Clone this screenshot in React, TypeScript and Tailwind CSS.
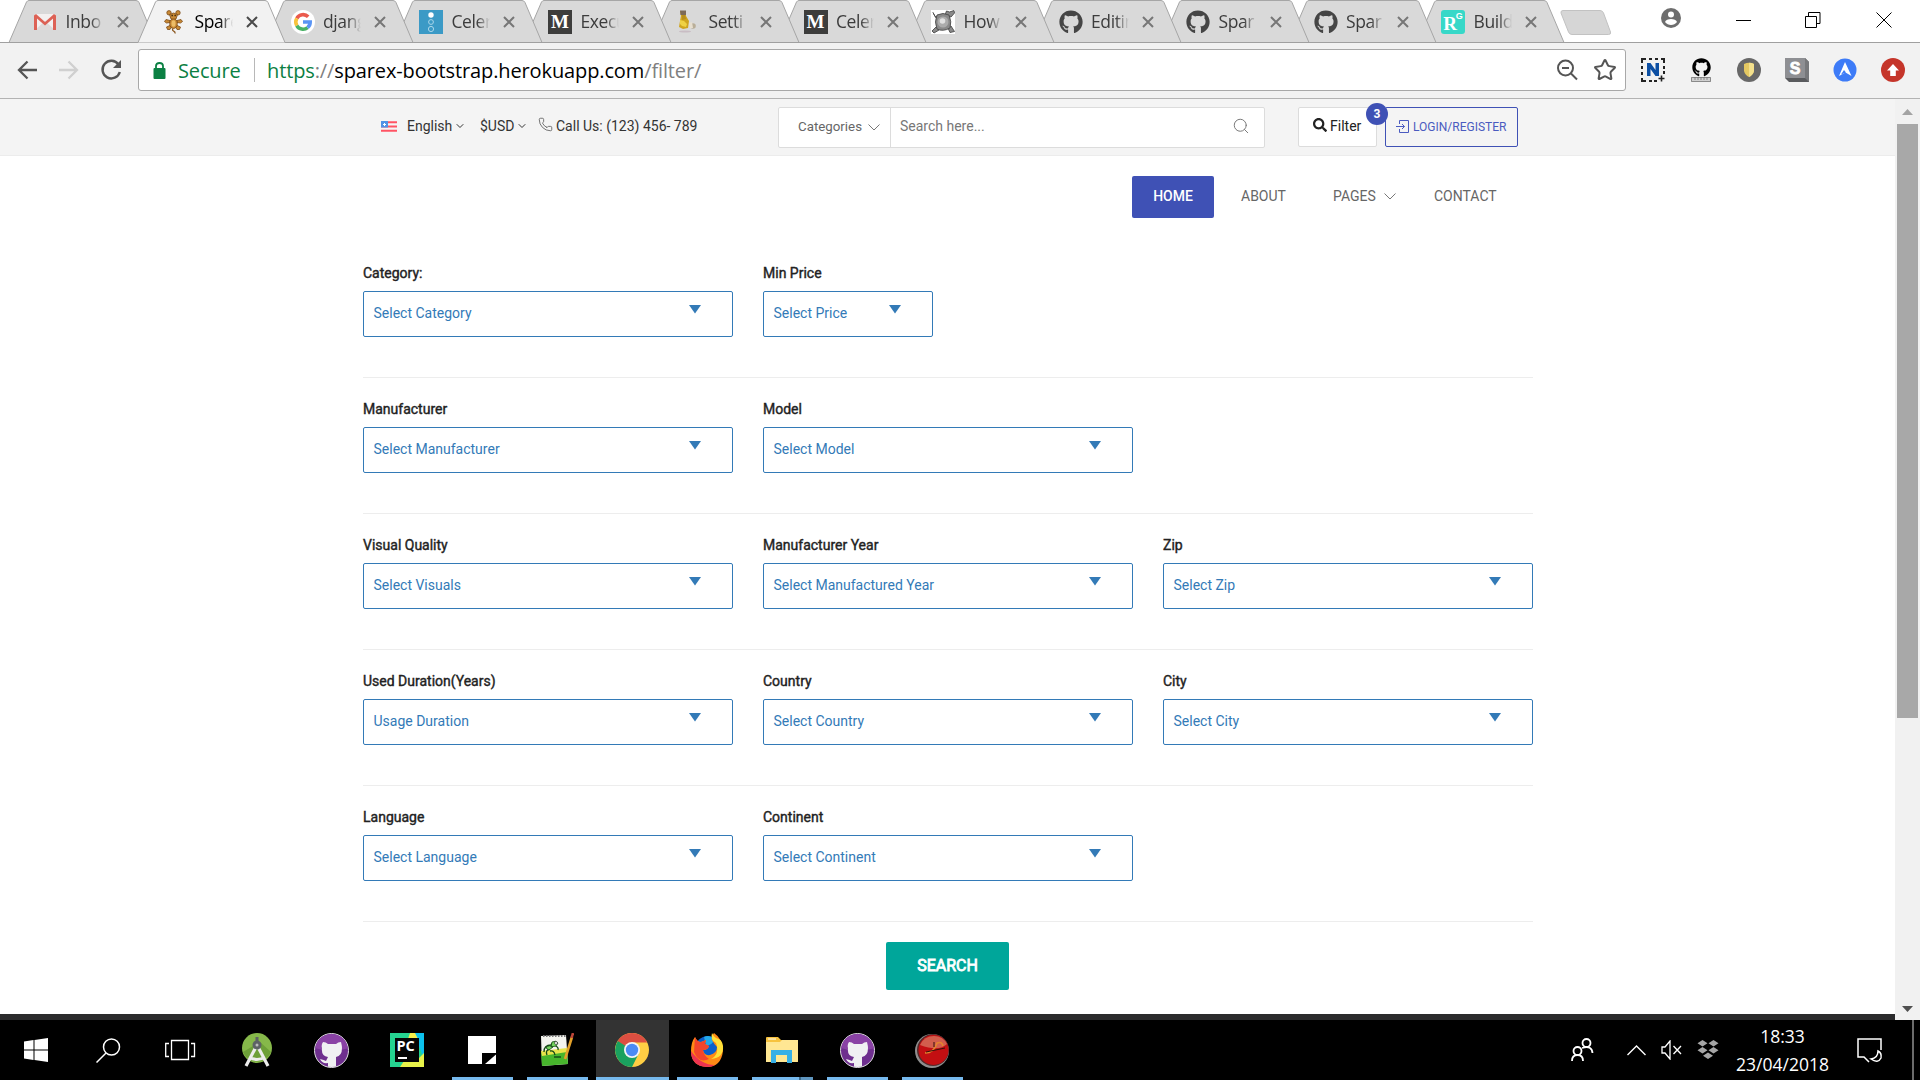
import React from "react";
import { FaGithub, FaSearch } from "react-icons/fa";
import { ChevronDown, Phone, Search, Star } from "lucide-react";

type IconName =
  | "gmail" | "mouse" | "google" | "celery" | "medium" | "bottle" | "turtle" | "github" | "rg";

const TABS: { icon: IconName; label: string; step: string; z: string }[] = [
  { icon: "gmail", label: "Inbo", step: "w-[129px]", z: "z-[12]" },
  { icon: "mouse", label: "Spare", step: "w-[128.5px]", z: "z-[20]" },
  { icon: "google", label: "djang", step: "w-[128.5px]", z: "z-[10]" },
  { icon: "celery", label: "Celer", step: "w-[129px]", z: "z-[9]" },
  { icon: "medium", label: "Execu", step: "w-[128px]", z: "z-[8]" },
  { icon: "bottle", label: "Setti", step: "w-[127.5px]", z: "z-[7]" },
  { icon: "medium", label: "Celer", step: "w-[127.5px]", z: "z-[6]" },
  { icon: "turtle", label: "How", step: "w-[127.5px]", z: "z-[5]" },
  { icon: "github", label: "Editin", step: "w-[127.5px]", z: "z-[4]" },
  { icon: "github", label: "Spar", step: "w-[127.5px]", z: "z-[3]" },
  { icon: "github", label: "Spar", step: "w-[127.5px]", z: "z-[2]" },
  { icon: "rg", label: "Build", step: "w-[128px]", z: "z-[1]" },
];

function TabIcon({ name }: { name: IconName }) {
  switch (name) {
    case "gmail":
      return (
        <svg viewBox="0 0 24 24" className="size-6">
          <path d="M2 4h20v16H2z" fill="#f3f0f0" />
          <path d="M2 20 12 11l10 9z" fill="#dedada" />
          <path d="M1 20V5.500L3 4l9 8 9-8 2 1.500V20h-3V8.500L12 15.500 4 8.500V20z" fill="#dd6155" />
        </svg>
      );
    case "mouse":
      return (
        <svg viewBox="0 0 24 24" className="size-6">
          <g fill="#c98a35" stroke="#7b4a16" strokeWidth=".8">
            <circle cx="7" cy="2.800" r="2.200" />
            <circle cx="16" cy="2.800" r="2.200" />
            <path d="m8 10.500-4-1-1.500 2 2 1.500 3.500-.500zM15 10.500l4-1 1.500 2-2 1.500-3.500-.500zM8 15.500l-3.500 1.500 1 2.500h2.500l1.500-2.500zM15 15.500l3.500 1.500-1 2.500h-2.500l-1.500-2.500z" />
            <ellipse cx="11.500" cy="13.500" rx="3.800" ry="5" />
            <path d="M7.500 4.500 11.500 3 15.500 4.500 14 9H9z" />
          </g>
          <ellipse cx="11.500" cy="13.500" rx="2" ry="3.200" fill="#edbd68" />
          <path d="M11 18.500c-2 3.500 3 1.500 2 5" stroke="#8c5820" fill="none" strokeWidth="1.300" />
          <path d="M9.500 5.500h1.300M12.500 5.500h1.300" stroke="#2e1a08" strokeWidth="1.400" />
        </svg>
      );
    case "google":
      return (
        <svg viewBox="0 0 24 24" className="size-6">
          <circle cx="12" cy="12" r="12" fill="#fff" />
          <g fill="none" strokeWidth="3.600">
            <path d="M17.200 6.800A7.200 7.200 0 0 0 5.800 8.400" stroke="#ea5a4d" />
            <path d="M5.800 8.400a7.200 7.200 0 0 0 0 7.200" stroke="#f8c33c" />
            <path d="M5.800 15.600a7.200 7.200 0 0 0 10.800 2" stroke="#4ab266" />
            <path d="M16.600 17.600A7.200 7.200 0 0 0 19.200 12H12" stroke="#5a95f5" />
          </g>
        </svg>
      );
    case "celery":
      return (
        <svg viewBox="0 0 24 24" className="size-6">
          <path d="M0 0h24v24H0z" fill="#3b9ac6" />
          <circle cx="12" cy="5" r="2.700" fill="#fff" />
          <circle cx="12" cy="12" r="2.400" fill="none" stroke="#a9d6ea" />
          <circle cx="12" cy="19" r="2.600" fill="none" stroke="#a9d6ea" />
        </svg>
      );
    case "medium":
      return (
        <span className="grid size-6 place-items-center bg-[#3d3d3c] font-['Liberation_Serif',serif] text-[19px] leading-none font-bold text-white">
          M
        </span>
      );
    case "bottle":
      return (
        <svg viewBox="0 0 24 24" className="size-6">
          <ellipse cx="9" cy="21.500" rx="6" ry="1" fill="#c9bdc4" />
          <path d="M4 1h6v5l3 5-1 7-5 1-4-2 1-6 1-5z" fill="#cfa51f" />
          <path d="M4 .500h6V5H4.500z" fill="#7d6a58" />
          <path d="m4 10 4 1 3 3-1 3-4-1-2-2z" fill="#efd244" />
          <path d="M6 5h3l1 4-4 1z" fill="#b98f1d" />
          <circle cx="17" cy="16" r="2.800" fill="#b9ae98" />
          <path d="m13 13 3-1 1 6h-3z" fill="#e7dfd0" />
        </svg>
      );
    case "turtle":
      return (
        <svg viewBox="0 0 24 24" className="size-6">
          <path d="M0 0h24v24H0z" fill="#fff" />
          <g fill="#8a8a8a" stroke="#4c4c4c" strokeWidth=".9">
            <path d="M14 5 15.500 1l3 1L23 .500 23.500 3 20 7zM5 8 2 2.500l2 4L8 7zM5 17l-4 4 2 2 5-3zM17 18l2 4.500 4.500-1L20 16z" />
            <path d="M6 5q6-3 12 0 3 7 1 13-7 4-13 1-3-7 0-14z" />
          </g>
          <circle cx="12" cy="12" r="5.500" fill="#acacac" />
          <circle cx="11.500" cy="11" r="2.800" fill="#e2e2e2" />
        </svg>
      );
    case "github":
      return <FaGithub className="size-6 text-[#454545]" />;
    case "rg":
      return (
        <span className="flex size-6 justify-center rounded-[3px] bg-[#37d8c8] font-['Liberation_Serif',serif] leading-none font-bold text-white">
          <span className="pt-1 text-[19px]">R</span>
          <span className="-ml-px pt-0.5 font-['Liberation_Sans',sans-serif] text-[9px]">G</span>
        </span>
      );
  }
}

function Tab({ tab, active }: { tab: (typeof TABS)[number]; active: boolean }) {
  return (
    <div className={`relative h-[43px] shrink-0 ${tab.step} ${tab.z}`}>
      <svg className="absolute top-0 left-0 overflow-visible" width="147" height="43">
        <path
          d="M0 42.500 17.500 2Q18.500.500 20 .500h107q2 0 3 2L147 42.500z"
          fill={active ? "#f2f2f2" : "#d9d9d9"}
        />
        <path
          d="M0 42.500 17.500 2Q18.500.500 20 .500h107q2 0 3 2L147 42.500"
          fill="none"
          stroke="#a6a6a6"
        />
        {!active && <path d="M0 42.500h147" stroke="#a0a0a0" />}
      </svg>
      <div className="relative flex h-[43px] w-[126px] items-center pl-[24.5px]">
        <TabIcon name={tab.icon} />
        <span
          className={`ml-[8.5px] w-[38px] overflow-hidden text-[17.5px] tracking-[-0.4px] whitespace-nowrap [mask-image:linear-gradient(to_right,#000_65%,transparent)] ${
            active ? "text-black" : "text-[#3c3c3c]"
          }`}
        >
          {tab.label}
        </span>
        <svg viewBox="0 0 12 12" className="ml-[13px] size-[12px] shrink-0">
          <path d="m1 1 10 10M11 1 1 11" stroke={active ? "#4a4a4a" : "#777"} strokeWidth="2" />
        </svg>
      </div>
    </div>
  );
}

function TabStrip() {
  return (
    <div className="flex h-[43px] items-start border-b border-[#a0a0a0] bg-white pl-[8.5px]">
      {TABS.map((t, i) => (
        <Tab key={i} tab={t} active={i === 1} />
      ))}
      <svg className="mt-2.5 ml-[15.5px] shrink-0" width="52" height="26" viewBox="0 0 52 26">
        <path d="M3 .500h37q2.500 0 3.500 2.500l7 19q.700 2.500-2 2.500H12q-2.500 0-3.500-2.500L1 3Q.500.500 3 .500z" fill="#d6d6d6" stroke="#c2c2c2" />
      </svg>
      <div className="ml-auto flex h-10 items-center text-black">
        <svg viewBox="0 0 20 20" className="mr-[55px] mb-1 size-5">
          <circle cx="10" cy="10" r="10" fill="#6e6e6e" />
          <circle cx="10" cy="6.600" r="3" fill="#fff" />
          <path d="M4 14c1-4 11-4 12 0-3 4-9 4-12 0z" fill="#fff" />
        </svg>
        <svg width="15" height="16" className="mr-[54px]">
          <path d="M0 8.500h15" stroke="currentColor" />
        </svg>
        <svg width="16" height="16" fill="none" stroke="currentColor" className="mr-[55px]">
          <path d="M.500 4.500h11v11H.500zM3.500 4.500v-4h11.500v11h-3.500" />
        </svg>
        <svg width="16" height="16" stroke="currentColor" className="mr-[28px]">
          <path d="m.500.500 15 15M15.500.500l-15 15" />
        </svg>
      </div>
    </div>
  );
}

function Extensions() {
  return (
    <div className="ml-[15px] flex items-center gap-6">
      <svg viewBox="0 0 24 24" className="size-6">
        <path
          d="M1 5V1h4M8 1h3M14 1h3M20 1h3v4M1 8v3M1 14v3M1 20v3h4M8 23h3M13 23h3M23 8v3M23 13v3"
          fill="none"
          stroke="#222"
          strokeWidth="2"
        />
        <path d="M6 18V5h3.500l5 7V5H18v13h-3.500L9.500 11v7z" fill="#0c4fa3" />
        <path d="M20.500 17.500v6M17.500 20.500h6" stroke="#222" strokeWidth="1.600" />
      </svg>
      <div className="flex w-6 flex-col items-center">
        <FaGithub className="size-[19px] text-black" />
        <svg width="20" height="5" className="bg-[#d0d0d0]">
          <path d="M.500.500h19v4H.500zM4 0v3M7 0v3M10 0v3M13 0v3M16 0v3" fill="none" stroke="#777" strokeWidth=".8" />
        </svg>
      </div>
      <svg viewBox="0 0 24 24" className="size-6">
        <circle cx="12" cy="12" r="12" fill="#686868" />
        <path d="M7 6q5-2.500 10 0v7q-1 4-5 6-4-2-5-6z" fill="#e4c862" />
        <path d="M12 4.700q3 0 5 1.300v7q-1 4-5 6z" fill="#f3e08c" />
      </svg>
      <svg viewBox="0 0 24 24" className="size-6 font-['Liberation_Sans',sans-serif]">
        <path d="m0 0 20 0 4 4v20H4l-4-4z" fill="#5a5b5e" />
        <path d="m20 0 4 4v20l-4-4z" fill="#77787b" />
        <path d="M0 0h20v20H0z" fill="#8e8f93" />
        <text x="10" y="16" textAnchor="middle" fontSize="16" fontWeight="700" fill="#fff" stroke="#fff" strokeWidth=".8">S</text>
      </svg>
      <svg viewBox="0 0 24 24" className="size-6">
        <circle cx="12" cy="12" r="11.500" fill="#3d7bf7" />
        <path d="m12 4 6.500 14-6-3.500L6 18z" fill="#fff" />
        <path d="m11 12 2 2.500-5 2z" fill="#3d7bf7" />
      </svg>
      <svg viewBox="0 0 24 24" className="size-6">
        <circle cx="12" cy="12" r="12" fill="#c5352a" />
        <path d="m12 6 6 6.500h-3.200V18H9.200v-5.500H6z" fill="#fff" />
      </svg>
    </div>
  );
}

function Toolbar() {
  return (
    <div className="flex h-14 items-center border-b border-[#b3b3b3] bg-[#f2f2f2] pb-px pl-[17px]">
      <svg width="20" height="20" fill="none" stroke="#555" strokeWidth="2.300">
        <path d="M20 10H2M10.500 1.500 2 10l8.500 8.500" />
      </svg>
      <svg width="20" height="20" fill="none" stroke="#d0d0d0" strokeWidth="2.300" className="ml-[22px]">
        <path d="M0 10h18M9.500 1.500 18 10l-8.500 8.500" />
      </svg>
      <svg width="22" height="22" fill="none" stroke="#555" strokeWidth="2.400" className="ml-[21px]">
        <path d="M18.500 5.500A8.800 8.800 0 1 0 19.800 13" />
        <path d="M21 1v8h-8z" fill="#555" stroke="none" />
      </svg>
      <div className="ml-4 flex h-[42px] w-[1488px] items-center rounded-[3px] border border-[#a8a8a8] bg-white pl-3.5 text-[20px]">
        <svg width="13" height="17">
          <path d="M1.500 6h10q1 0 1 1v9q0 1-1 1h-10q-1 0-1-1V7q0-1 1-1z" fill="#0b8043" />
          <path d="M3 7V4q0-3 3.500-3T10 4v3" fill="none" stroke="#0b8043" strokeWidth="1.800" />
        </svg>
        <span className="ml-3 w-[62px] pt-0.5 tracking-[-0.15px] text-[#0b8043]">Secure</span>
        <span className="mr-3 ml-[14px] h-6 w-px bg-[#b8b8b8]" />
        <span className="pt-0.5 tracking-[-0.12px] text-[#808080]">
          <span className="text-[#0b8043]">https</span>://
          <span className="text-black">sparex-bootstrap.herokuapp.com</span>/filter/
        </span>
        <svg width="22" height="22" fill="none" stroke="#555" strokeWidth="2" className="mr-[15px] ml-auto">
          <circle cx="9.500" cy="9" r="7.500" />
          <path d="m15 14.500 6 6M6 9h7" />
        </svg>
        <Star className="mr-2 size-6 text-[#555]" strokeWidth={2} strokeLinejoin="miter" />
      </div>
      <Extensions />
    </div>
  );
}

function ThinChevron() {
  return (
    <svg width="12" height="7" fill="none" stroke="#777" className="shrink-0">
      <path d="M.500.500 6 6 11.500.500" />
    </svg>
  );
}

function TopBar() {
  return (
    <div className="flex h-[57px] items-start border-b border-[#ececec] bg-[#f4f4f4] pt-2 pl-[381px] text-sm text-[#333]">
      <div className="flex h-[38px] w-[397px] items-center">
        <svg width="16" height="11" className="mr-[10px]">
          <path d="M0 0h16v11H0z" fill="#f5f5f5" />
          <path d="M0 1.200h16M0 5.500h16M0 9.800h16" stroke="#ff5464" strokeWidth="2" />
          <path d="M0 0h7v6.500H0z" fill="#4f93e6" />
          <path d="M2 3.500h3M3.500 2v3" stroke="#fff" />
        </svg>
        <span className="w-[46px]">English</span>
        <ChevronDown className="ml-px size-3" />
        <span className="ml-[14px] w-[35px]">$USD</span>
        <ChevronDown className="ml-px size-3" />
        <Phone className="mb-1 ml-[10px] size-[15px] text-[#555]" strokeWidth={1.3} />
        <span className="ml-[3px] whitespace-nowrap">Call Us: (123) 456- 789</span>
      </div>
      <div className="flex h-[41px] w-[487px] items-center rounded-[2px] border border-[#dcdcdc] bg-white pb-[3px] text-[#777]">
        <div className="-mb-[3px] flex h-[39px] w-[112px] items-center justify-between border-r border-[#dcdcdc] pr-[10px] pb-px pl-[19px] text-[13.3px] text-[#666]">
          Categories
          <ThinChevron />
        </div>
        <span className="ml-[9px]">Search here...</span>
        <Search className="mr-[14px] ml-auto size-[18px]" strokeWidth={1.3} />
      </div>
      <div className="relative ml-[33px] flex h-10 w-[79px] items-center rounded-[2px] border border-[#dcdcdc] bg-white pb-[2px] pl-[14px] text-[#222]">
        <FaSearch className="mr-[3px] mb-0.5 size-[14px]" />
        Filter
        <span className="absolute -top-[5px] left-[67px] z-10 grid size-[22px] place-items-center rounded-full bg-[#3f51b5] text-xs font-bold text-white">
          3
        </span>
      </div>
      <div className="ml-2 flex h-10 w-[133px] items-center rounded-[2px] border border-[#3f51b5] pb-px pl-[10px] text-xs whitespace-nowrap text-[#4a5bc0]">
        <svg width="13" height="13" fill="none" stroke="currentColor" strokeWidth="1" className="mr-1 shrink-0">
          <path d="M3.500 4V.500h9v12h-9V9M0 6.500h8.500M6 4l2.500 2.500L6 9" />
        </svg>
        LOGIN/REGISTER
      </div>
    </div>
  );
}

function Nav() {
  return (
    <nav className="flex h-[62px] items-end pl-[1132px] text-sm text-[#666]">
      <div className="grid h-[42px] w-[82px] place-items-center rounded-[2px] bg-[#3f51b5] pb-0.5 font-medium text-white">
        HOME
      </div>
      <div className="flex h-[42px] items-center pb-0.5">
        <span className="ml-[27px] w-[92px]">ABOUT</span>
        <span className="w-[51px]">PAGES</span>
        <ThinChevron />
        <span className="ml-[38px]">CONTACT</span>
      </div>
    </nav>
  );
}

const ROWS: [string, string][][] = [
  [["Category:", "Select Category"], ["Min Price", "Select Price"]],
  [["Manufacturer", "Select Manufacturer"], ["Model", "Select Model"]],
  [["Visual Quality", "Select Visuals"], ["Manufacturer Year", "Select Manufactured Year"], ["Zip", "Select Zip"]],
  [["Used Duration(Years)", "Usage Duration"], ["Country", "Select Country"], ["City", "Select City"]],
  [["Language", "Select Language"], ["Continent", "Select Continent"]],
];

function Field({ label, value }: { label: string; value: string }) {
  const narrow = label === "Min Price";
  return (
    <div className={narrow ? "w-[170px]" : "w-[370px]"}>
      <div className="h-7 pl-[-0.5px] text-sm leading-5 text-[#222] [-webkit-text-stroke:0.4px_#222]">{label}</div>
      <div className="flex h-[46px] items-start justify-between rounded-[2px] border border-[#337ab7] pt-[11px] pr-[31.5px] pl-[9.5px] text-sm leading-5 text-[#337ab7]">
        {value}
        <svg width="12" height="9" className="mt-0.5">
          <path d="M0 0h12L6 8.500z" fill="#337ab7" />
        </svg>
      </div>
    </div>
  );
}

function FilterForm() {
  return (
    <main className="ml-[363px] w-[1170px] pt-[24px]">
      {ROWS.map((row, i) => (
        <section key={i} className="flex h-[136px] gap-[30px] border-b border-[#ededed] pt-[21px]">
          {row.map(([label, value]) => (
            <Field key={label} label={label} value={value} />
          ))}
        </section>
      ))}
      <button className="mt-5 ml-[523px] block h-12 w-[123px] rounded-[2px] bg-[#00a69a] text-base text-white [-webkit-text-stroke:0.8px_#fff]">
        SEARCH
      </button>
    </main>
  );
}

function Scrollbar() {
  return (
    <div className="flex w-[25px] flex-col items-center bg-[#f1f1f1]">
      <svg width="11" height="6" className="mt-[10px]">
        <path d="M0 6 5.500 0 11 6z" fill="#a3a3a3" />
      </svg>
      <div className="mt-[9px] h-[594px] w-[21px] bg-[#a8a8a8]" />
      <svg width="11" height="6" className="mt-auto mb-2">
        <path d="M0 0h11L5.500 6z" fill="#505050" />
      </svg>
    </div>
  );
}

function GitHubDesktop() {
  return (
    <span className="relative grid size-[35px] place-items-center overflow-hidden rounded-full border border-[#ddd] bg-[#6e2f8e]">
      <svg viewBox="0 0 34 34" className="size-[34px]">
        <path d="M0 0h34v14Q17 20 0 14z" fill="#8a42a5" />
        <path d="M8 8q3 0 5 2h8q2-2 5-2 1 4 1 6 0 8-6 9v11h-8v-5q-6 1-8-4 4 1 6 2l2-4q-7-1-6-9-1-3 1-6z" fill="#f0f0f2" />
      </svg>
    </span>
  );
}

const APPS: { icon: React.ReactNode; bar: string }[] = [
  {
    bar: "",
    icon: (
      <svg viewBox="0 0 34 36" className="h-9 w-[34px]">
        <circle cx="17" cy="16" r="15" fill="#86b84a" />
        <path d="M3 20a15 15 0 0 0 28 0L20 10z" fill="#6d9f38" />
        <path d="m17 13-11 21M17 13l11 21M9 25q8 5 16 0" stroke="#ececec" strokeWidth="3.200" fill="none" />
        <circle cx="17" cy="13" r="4.500" fill="#5d6265" />
        <path d="M17 5v5" stroke="#5d6265" strokeWidth="3" />
        <circle cx="17" cy="13" r="1.500" fill="#bbb" />
      </svg>
    ),
  },
  { bar: "", icon: <GitHubDesktop /> },
  {
    bar: "",
    icon: (
      <svg viewBox="0 0 34 34" className="size-[34px] font-['Open_Sans',sans-serif]">
        <path d="M0 0h34v34H0z" fill="#25d390" />
        <path d="m24 0h10v26z" fill="#0cc2ee" />
        <path d="M20 0h5l3 6h-10z" fill="#f7f04b" />
        <path d="m34 20v14H10l4-6 14-2z" fill="#e8f24a" />
        <path d="M5 5h24v24H5z" fill="#050505" />
        <text x="6.500" y="18" fontSize="14.500" fontWeight="700" fill="#fff">PC</text>
        <path d="M8 24h9v2H8z" fill="#fff" />
      </svg>
    ),
  },
  {
    bar: "w-[61px]",
    icon: (
      <svg viewBox="0 0 28 28" className="size-7">
        <path d="M0 0h28v28H0z" fill="#fff" />
        <path d="M14 28V17h14v1.500L17 28z" fill="#000" />
      </svg>
    ),
  },
  {
    bar: "w-[61px]",
    icon: (
      <svg viewBox="0 0 34 34" className="size-[34px]">
        <path d="m1 3 25-1 2 29-26 2z" fill="#f4f4ee" />
        <path d="m1 20 26-3 1 14-26 2z" fill="#47b52c" />
        <path d="m1 18 26-3v4L2 23z" fill="#e7e44a" />
        <path d="M3 3h23" stroke="#777" strokeWidth="2" strokeDasharray="1.500 1.500" />
        <path d="M4 19q0-7 7-7 1-3 6-2M7 22q-2-5 3-6M10 18q4-1 5 4M14 12q5 2 4 5M14 24h7" fill="none" stroke="#164b17" strokeWidth="1.300" />
        <path d="M12 9q4-2 6 1l-2 3-5 1zM6 15q3-4 7-1l-4 3z" fill="#72d45a" stroke="#164b17" strokeWidth=".8" />
        <circle cx="16" cy="10" r="1.500" fill="#fff" stroke="#222" strokeWidth=".6" />
        <path d="m25 26 7-22" stroke="#e3a129" strokeWidth="2.600" />
        <path d="m31.500 5 1.500-5" stroke="#bd4639" strokeWidth="2.600" />
      </svg>
    ),
  },
  {
    bar: "w-[73px]",
    icon: (
      <svg viewBox="0 0 34 34" className="size-[34px]">
        <circle cx="17" cy="17" r="17" fill="#ffce44" />
        <path d="M17 17 2.300 8.500A17 17 0 0 1 31.700 8.500L32 9.500H17z" fill="#dc4e41" />
        <path d="M2.800 8a17 17 0 0 0 14.200 26L24 20 17 17z" fill="#1aa15f" />
        <circle cx="17" cy="17" r="8" fill="#f4f4f4" />
        <circle cx="17" cy="17" r="6.200" fill="#4a8af4" />
      </svg>
    ),
  },
  {
    bar: "w-[61px]",
    icon: (
      <svg viewBox="0 0 34 34" className="size-[34px]">
        <circle cx="18" cy="16" r="13" fill="#0b5fcb" />
        <path d="M14 4q6-3 10 3-2 6-8 5z" fill="#23a9e8" />
        <path d="M5 4q2 5 6 5l5-2-1 4 4 2q-1 4-6 4 1 6 7 5 7-2 7-8-3-3-5-7 0-5 2-7 9 6 9 18Q31 34 17 34 1 33 1 18 1 9 5 4z" fill="#ff8a15" />
        <path d="M5 4q2 5 6 5l5-2-1 4 4 2q-1 4-6 4 1 6 6 9-10 5-15-7z" fill="#f4452c" />
        <path d="M22 0q-2 7 4 10 4 11-5 16 13-1 12-13Q32 6 26 5q-3-2-4-5z" fill="#ffe038" />
        <path d="M1 18q0 15 16 16 5 0 8-2-14 0-24-14z" fill="#ee3450" />
      </svg>
    ),
  },
  {
    bar: "w-[61px]",
    icon: (
      <svg viewBox="0 0 32 27" className="h-[27px] w-8">
        <path d="M0 1q0-1 1-1h11l3 3h17v22H0z" fill="#f7c33f" />
        <path d="M0 5h14l2-2h16v21q0 1-1 1H0z" fill="#ffe793" />
        <path d="M2 2h8" stroke="#fff" />
        <path d="M5 13h21v13h-5v-8H10v8H5z" fill="#37b0e6" />
      </svg>
    ),
  },
  { bar: "w-[61px]", icon: <GitHubDesktop /> },
  {
    bar: "w-[61px]",
    icon: (
      <svg viewBox="0 0 35 35" className="size-[35px]">
        <circle cx="17" cy="18" r="17" fill="#8e8e8e" />
        <circle cx="18" cy="17" r="16" fill="#55292a" />
        <circle cx="18.500" cy="17" r="15" fill="#c30f12" />
        <path d="M5 12q4-9 14-9 9 0 13 8-8 8-27 1z" fill="#d77962" fillOpacity=".75" />
        <path d="M10 20q9 0 12-10 5-2 6 3" fill="none" stroke="#e4832d" strokeWidth="1.600" />
        <path d="m11 19 19-4M19 9v5" stroke="#35100c" />
      </svg>
    ),
  },
];

function Taskbar() {
  return (
    <footer className="flex h-[60px] items-center bg-black text-white">
      <svg viewBox="0 0 24 24" className="ml-6 size-6" fill="#fff">
        <path d="M0 3.500 9.500 2v9.500H0zM10.500 1.900 24 0v11.500H10.500zM0 12.500h9.500V22L0 20.500zM10.500 12.500H24V24l-13.500-1.900z" />
      </svg>
      <svg width="25" height="25" fill="none" stroke="#fff" strokeWidth="1.500" className="ml-[48px]">
        <circle cx="15.500" cy="9" r="8" />
        <path d="M10 15 .500 24.500" />
      </svg>
      <svg width="31" height="22" fill="none" stroke="#fff" strokeWidth="1.300" className="ml-[44px]">
        <path d="M6.500 1.500h17v19h-17zM4 4.500H.700v13H4M26 4.500h3.500v13H26" />
      </svg>
      <div className="ml-[24px] flex h-full">
        {APPS.map((app, i) => (
          <div key={i} className="flex h-full w-[75px] flex-col items-center">
            <div
              className={`grid h-[57px] place-items-center pt-[3px] ${
                i === 5 ? "w-[73px] bg-[#333] pr-px" : i > 5 ? "w-[61px] pr-px" : "w-[61px] pr-[2px]"
              }`}
            >
              {app.icon}
            </div>
            {app.bar && (
              <div className={`flex h-[3px] justify-end bg-[#76b9ed] ${app.bar}`}>
                {i === 7 && <span className="w-[14px] border-l-2 border-[#3d6a8a] bg-[#5f96bf]" />}
              </div>
            )}
          </div>
        ))}
      </div>
      <div className="ml-auto flex h-full items-center">
        <svg width="23" height="24" fill="none" stroke="#fff" strokeWidth="1.800" className="mr-[33px]">
          <circle cx="15.500" cy="5" r="4" />
          <circle cx="6.500" cy="13" r="4" />
          <path d="M1 23q0-6 5.500-6t5.500 6M11 10q10-3 10.500 5" />
        </svg>
        <svg width="19" height="11" fill="none" stroke="#fff" strokeWidth="1.400" className="mr-[15px]">
          <path d="m.500 10 9-9 9 9" />
        </svg>
        <svg width="21" height="20" fill="none" stroke="#fff" strokeWidth="1.300" className="mr-[15px]">
          <path d="M1 7h3l5-6v18l-5-6H1zM12.500 6l7.500 8M20 6l-7.500 8" />
        </svg>
        <svg viewBox="0 0 22 20" width="22" height="20" fill="#a6a6a6" className="mr-[16px]">
          <path d="m5.500 0 5 3.200-5 3.300-5-3.300zM16.500 0l5 3.200-5 3.300-5-3.300zM5.500 7l5 3.200-5 3.300-5-3.300zM16.500 7l5 3.200-5 3.300-5-3.300zM11 12.500l5 3.200-5 3.300-5-3.300z" />
        </svg>
        <div className="flex w-[95px] flex-col items-center text-[17.5px] leading-7 whitespace-nowrap">
          <span>18:33</span>
          <span>23/04/2018</span>
        </div>
        <svg width="26" height="25" fill="none" stroke="#fff" strokeWidth="1.500" className="ml-[27px]">
          <path d="M24 12V1H1v18h6l5 5M21 13q0 7-7 8 7 5 10-1 1-5-3-7z" />
        </svg>
        <div className="ml-[29px] h-full w-[8px] border-l-2 border-[#6b6b6b]" />
      </div>
    </footer>
  );
}

export default function App() {
  return (
    <div className="h-[1080px] w-[1920px] overflow-hidden bg-white font-['Open_Sans','Noto_Sans',sans-serif]">
      <TabStrip />
      <Toolbar />
      <div className="flex h-[921px] font-[Roboto,sans-serif]">
        <div className="flex w-[1895px] flex-col">
          <TopBar />
          <Nav />
          <FilterForm />
          <div className="mt-auto h-1.5 bg-[#2b2b2c]" />
        </div>
        <Scrollbar />
      </div>
      <Taskbar />
    </div>
  );
}
